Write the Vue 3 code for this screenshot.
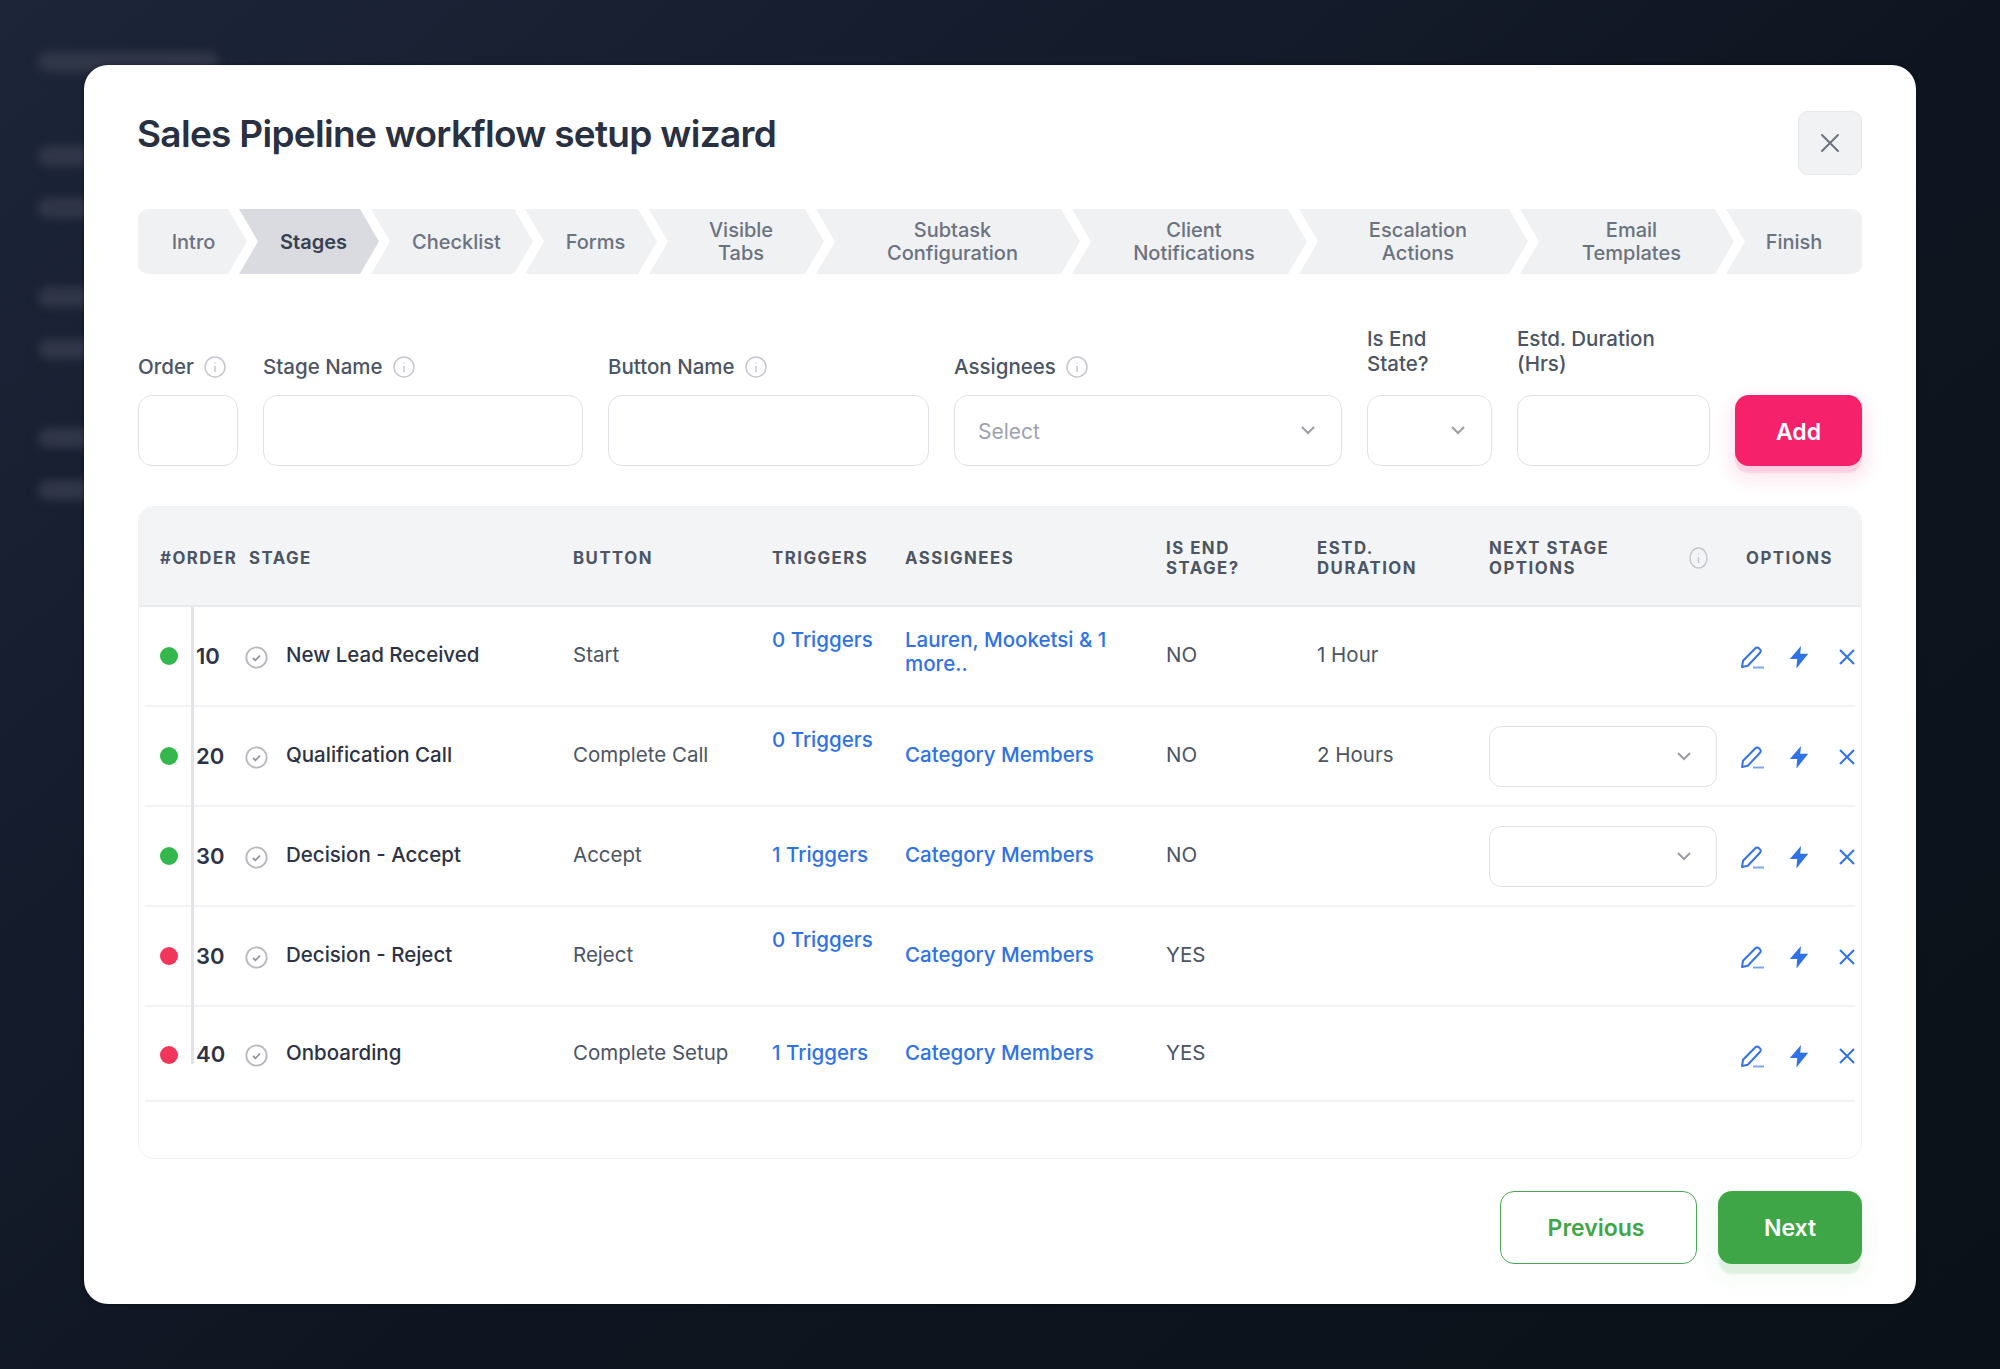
<script setup>
const steps = [
  { lines: ["Intro"], width: 109 },
  { lines: ["Stages"], width: 140, active: true },
  { lines: ["Checklist"], width: 162 },
  { lines: ["Forms"], width: 132 },
  { lines: ["Visible", "Tabs"], width: 175 },
  { lines: ["Subtask", "Configuration"], width: 264 },
  { lines: ["Client", "Notifications"], width: 235 },
  { lines: ["Escalation", "Actions"], width: 229 },
  { lines: ["Email", "Templates"], width: 214 },
  { lines: ["Finish"], width: 136 },
];

const fields = [
  { label: ["Order"], info: true },
  { label: ["Stage Name"], info: true },
  { label: ["Button Name"], info: true },
  { label: ["Assignees"], info: true, select: true, placeholder: "Select" },
  { label: ["Is End", "State?"], select: true },
  { label: ["Estd. Duration", "(Hrs)"] },
];

const rows = [
  { order: 10, name: "New Lead Received", button: "Start", triggers: "0 Triggers", assignees: "Lauren, Mooketsi & 1 more..", wraps: true, end: "NO", duration: "1 Hour", live: true },
  { order: 20, name: "Qualification Call", button: "Complete Call", triggers: "0 Triggers", assignees: "Category Members", end: "NO", duration: "2 Hours", live: true, next: true },
  { order: 30, name: "Decision - Accept", button: "Accept", triggers: "1 Triggers", assignees: "Category Members", end: "NO", duration: "", live: true, next: true },
  { order: 30, name: "Decision - Reject", button: "Reject", triggers: "0 Triggers", assignees: "Category Members", end: "YES", duration: "" },
  { order: 40, name: "Onboarding", button: "Complete Setup", triggers: "1 Triggers", assignees: "Category Members", end: "YES", duration: "" },
];

const ghostBars = [181, 120, 120, 120, 120, 120, 120];
</script>

<template>
  <div class="page">
    <div class="ghost">
      <span v-for="(w, i) in ghostBars" :key="i" class="ghost-bar" :style="{ width: w + 'px' }"></span>
    </div>

    <div class="modal">
      <header class="head">
        <h1>Sales Pipeline workflow setup wizard</h1>
        <button class="close">
          <svg width="20" height="20" viewBox="0 0 20 20" fill="none" stroke="#6b7280" stroke-width="2" stroke-linecap="round">
            <path d="M2 2l16 16M18 2L2 18" />
          </svg>
        </button>
      </header>

      <nav class="steps">
        <div
          v-for="(s, i) in steps"
          :key="i"
          class="step"
          :class="{ active: s.active, first: i === 0, last: i === steps.length - 1 }"
          :style="{ width: s.width + 'px' }"
        >
          <span>
            <template v-for="(l, j) in s.lines" :key="j">{{ l }}<br v-if="j < s.lines.length - 1" /></template>
          </span>
        </div>
      </nav>

      <section class="form">
        <div v-for="(f, i) in fields" :key="i" class="field">
          <div class="label" :class="{ single: f.label.length === 1 }">
            <span>
              <template v-for="(l, j) in f.label" :key="j">{{ l }}<br v-if="j < f.label.length - 1" /></template>
            </span>
            <svg v-if="f.info" class="info" width="22" height="22" viewBox="0 0 22 22" fill="none" stroke="#c4c7cd" stroke-width="1.5">
              <circle cx="11" cy="11" r="10" />
              <path d="M11 10v6M11 6.5v1" />
            </svg>
          </div>
          <div class="input">
            <span v-if="f.placeholder" class="placeholder">{{ f.placeholder }}</span>
            <svg v-if="f.select" class="chev" width="14" height="9" viewBox="0 0 14 9" fill="none" stroke="#9a9da3" stroke-width="2">
              <path d="M1 1l6 6 6-6" />
            </svg>
          </div>
        </div>
        <button class="add">Add</button>
      </section>

      <section class="table">
        <div class="thead">
          <div class="th th-order">#ORDER</div>
          <div class="th">STAGE</div>
          <div class="th">BUTTON</div>
          <div class="th">TRIGGERS</div>
          <div class="th">ASSIGNEES</div>
          <div class="th">IS END<br />STAGE?</div>
          <div class="th">ESTD.<br />DURATION</div>
          <div class="th th-next">
            <span>NEXT STAGE<br />OPTIONS</span>
            <svg width="19" height="22" viewBox="0 0 19 22" fill="none" stroke="#c4c7cd" stroke-width="1.5">
              <ellipse cx="9.5" cy="11" rx="8.5" ry="10" />
              <path d="M9.5 10v6M9.5 6.5v1" />
            </svg>
          </div>
          <div class="th th-options">OPTIONS</div>
        </div>

        <div class="tbody">
          <span class="rail"></span>
          <div v-for="(r, i) in rows" :key="i" class="row" :class="{ short: i === rows.length - 1 }">
            <div class="cell-dot"><span class="dot" :class="r.live ? 'green' : 'red'"></span></div>
            <div class="num">{{ r.order }}</div>
            <div class="cell-check">
              <svg width="23" height="23" viewBox="0 0 23 23" fill="none" stroke="#b7b9be" stroke-width="1.8">
                <circle cx="11.5" cy="11.5" r="10.2" />
                <path d="M8 12l2.5 2.3L15 9.5" stroke="#8f9297" />
              </svg>
            </div>
            <div class="text name">{{ r.name }}</div>
            <div class="text">{{ r.button }}</div>
            <div class="text link" :class="{ zero: r.triggers.startsWith('0') }">{{ r.triggers }}</div>
            <div class="text link assignees" :class="{ wraps: r.wraps }">{{ r.assignees }}</div>
            <div class="text">{{ r.end }}</div>
            <div class="text">{{ r.duration }}</div>
            <div class="cell-next">
              <div v-if="r.next" class="next-select">
                <svg width="14" height="9" viewBox="0 0 14 9" fill="none" stroke="#9a9da3" stroke-width="2">
                  <path d="M1 1l6 6 6-6" />
                </svg>
              </div>
            </div>
            <div class="opts">
              <svg width="24" height="24" viewBox="0 0 24 24" fill="none" stroke="#3273e6" stroke-width="2" stroke-linejoin="round">
                <path d="M2 22l1-6.2L15.4 3.2a2.4 2.4 0 0 1 3.4 0l1.2 1.2a2.4 2.4 0 0 1 0 3.4L7.8 20.8z" />
                <path d="M13 22.5h11" stroke="#7ea6ef" />
              </svg>
              <svg width="20" height="24" viewBox="0 0 20 24" fill="#2f72e6">
                <path d="M12 1L0.8 14h7.4L7.4 23.5 19.2 8.8h-8z" />
              </svg>
              <svg class="opt-x" width="16" height="16" viewBox="0 0 16 16" fill="none" stroke="#2f72e6" stroke-width="2">
                <path d="M1 1l14 14M15 1L1 15" />
              </svg>
            </div>
          </div>
        </div>
      </section>

      <footer class="foot">
        <button class="btn prev">Previous</button>
        <button class="btn next">Next</button>
      </footer>
    </div>
  </div>
</template>

<style>
html,
body {
  margin: 0;
  background: #0e141e;
}
</style>

<style scoped>
.page {
  position: relative;
  height: 1369px;
  box-sizing: border-box;
  padding: 65px 84px 0 84px;
  overflow: hidden;
  font-family: Inter, "Liberation Sans", sans-serif;
  background: linear-gradient(140deg, #1d2539 0%, #161d2e 26%, #0f1520 56%, #0b1118 100%);
}

.ghost {
  position: absolute;
  left: 38px;
  top: 52px;
  display: flex;
  flex-direction: column;
  align-items: flex-start;
  filter: blur(5px);
}

.ghost-bar {
  height: 20px;
  margin-bottom: 32px;
  border-radius: 10px;
  background: #313749;
}

.ghost-bar:nth-child(1) {
  margin-bottom: 74px;
}

.ghost-bar:nth-child(3),
.ghost-bar:nth-child(5) {
  margin-bottom: 69px;
}

.modal {
  position: relative;
  height: 1239px;
  box-sizing: border-box;
  padding: 46px 54px 40px 54px;
  background: #fff;
  border-radius: 24px;
  box-shadow: 0 0 4px rgba(0, 0, 0, 0.5);
}

.head {
  display: flex;
  justify-content: space-between;
  align-items: flex-start;
  height: 64px;
}

h1 {
  margin: 0 0 0 -1px;
  font-size: 37px;
  line-height: 46px;
  font-weight: 600;
  letter-spacing: -0.7px;
  color: #283041;
}

.close {
  display: flex;
  align-items: center;
  justify-content: center;
  width: 64px;
  height: 64px;
  padding: 0;
  background: #f1f2f4;
  border: 1px solid #e5e7eb;
  border-radius: 10px;
}

.steps {
  display: flex;
  margin-top: 34px;
  height: 65px;
}

.step {
  display: flex;
  flex: none;
  align-items: center;
  justify-content: center;
  box-sizing: border-box;
  margin-left: -8px;
  padding: 1.5px 0 0 9px;
  text-align: center;
  font-size: 20px;
  line-height: 23px;
  font-weight: 500;
  color: #6b7280;
  background: #f0f1f3;
  clip-path: polygon(0 0, calc(100% - 19px) 0, 100% 50%, calc(100% - 19px) 100%, 0 100%, 19px 50%);
}

.step.first {
  margin-left: 0;
  padding-left: 2px;
  border-radius: 10px 0 0 10px;
  clip-path: polygon(0 0, calc(100% - 19px) 0, 100% 50%, calc(100% - 19px) 100%, 0 100%);
}

.step.last {
  border-radius: 0 10px 10px 0;
  padding-left: 0;
  clip-path: polygon(0 0, 100% 0, 100% 100%, 0 100%, 19px 50%);
}

.step.active {
  background: #d9dbe0;
  color: #374151;
  font-weight: 600;
}

.form {
  display: grid;
  grid-template-columns: 100px 320px 321px 388px 125px 193px 127px;
  column-gap: 25px;
  align-items: end;
  margin-top: 52px;
}

.label {
  display: flex;
  align-items: center;
  gap: 10px;
  margin-bottom: 19px;
  font-size: 20.5px;
  line-height: 25px;
  font-weight: 500;
  color: #4b5563;
}

.label.single {
  margin-bottom: 16px;
}

.info {
  flex: none;
}

.input {
  position: relative;
  display: flex;
  align-items: center;
  justify-content: space-between;
  height: 71px;
  box-sizing: border-box;
  padding: 0 26px 0 23px;
  border: 1.5px solid #dfe1e6;
  border-radius: 14px;
  background: #fff;
}

.input .chev {
  margin-left: auto;
}

.placeholder {
  font-size: 21px;
  color: #9ca3af;
  margin-top: 2px;
}

.add {
  height: 71px;
  padding: 2px 0 0;
  border: none;
  border-radius: 14px;
  background: #f5226b;
  color: #fff;
  font-family: inherit;
  font-size: 23px;
  font-weight: 600;
  box-shadow: 0 7px 1px rgba(245, 34, 107, 0.13), 0 9px 16px 7px rgba(245, 34, 107, 0.09);
}

.table {
  position: relative;
  margin-top: 40px;
  height: 653px;
  box-sizing: border-box;
  border: 1.5px solid #f0f1f3;
  border-radius: 16px;
  overflow: hidden;
}

.thead {
  display: grid;
  grid-template-columns: 104px 324px 199px 133px 261px 151px 172px 246px 120px;
  align-items: center;
  height: 93.5px;
  padding: 4px 6px 0;
  background: #f3f4f6;
  border-bottom: 2px solid #e9eaed;
}

.th {
  font-size: 16.8px;
  line-height: 20px;
  font-weight: 700;
  letter-spacing: 1.5px;
  color: #4b5563;
}

.th-order {
  padding-left: 15px;
}

.th-next {
  display: flex;
  align-items: center;
  justify-content: space-between;
  padding-right: 27px;
}

.th-options {
  padding-left: 11px;
}

.tbody {
  position: relative;
  padding: 0 6px;
}

.rail {
  position: absolute;
  left: 52px;
  top: 0;
  width: 2.5px;
  height: 457px;
  background: #e1e3e8;
}

.row {
  display: grid;
  grid-template-columns: 47px 51px 44px 286px 199px 133px 261px 151px 172px 246px 120px;
  align-items: center;
  height: 100px;
  box-sizing: border-box;
  padding-top: 1px;
  border-bottom: 2px solid #f1f2f4;
}

.row.short {
  height: 95px;
  padding-top: 3px;
}

.cell-dot {
  padding-left: 15px;
  display: flex;
}

.dot {
  width: 18px;
  height: 18px;
  border-radius: 50%;
}

.dot.green {
  background: #34b84c;
}

.dot.red {
  background: #f0365a;
}

.num {
  padding-left: 4px;
  font-size: 22px;
  font-weight: 600;
  color: #2d3345;
  margin-top: -1px;
}

.cell-check {
  display: flex;
  padding-left: 2px;
  margin-top: 2px;
}

.text {
  padding-bottom: 3px;
  font-size: 20.5px;
  line-height: 24px;
  color: #4b5563;
}

.name {
  font-weight: 500;
  color: #2d3345;
  margin-left: -1px;
}

.link {
  color: #2f72e6;
  font-weight: 500;
}

.zero {
  padding-bottom: 33px;
}

.assignees {
  padding-right: 20px;
}

.assignees.wraps {
  padding-bottom: 8px;
}

.next-select {
  display: flex;
  align-items: center;
  justify-content: flex-end;
  width: 228px;
  height: 61px;
  box-sizing: border-box;
  padding-right: 25px;
  border: 1.5px solid #dfe1e6;
  border-radius: 12px;
}

.opts {
  display: flex;
  align-items: center;
  gap: 25px;
  padding-left: 5px;
  margin-top: 2px;
}

.opt-x {
  margin-left: 5px;
  flex: none;
}

.foot {
  display: flex;
  justify-content: flex-end;
  gap: 21px;
  margin-top: 32px;
}

.btn {
  height: 73px;
  padding: 0;
  border-radius: 14px;
  font-family: inherit;
  font-size: 23px;
  font-weight: 600;
}

.prev {
  width: 197px;
  padding-right: 5px;
  background: #fff;
  border: 1.5px solid #4aa852;
  color: #3fa648;
}

.next {
  width: 144px;
  background: #3fa648;
  border: none;
  color: #fff;
  box-shadow: 0 11px 2px -1px rgba(63, 166, 72, 0.13), 0 10px 18px 10px rgba(63, 166, 72, 0.04);
}
</style>
